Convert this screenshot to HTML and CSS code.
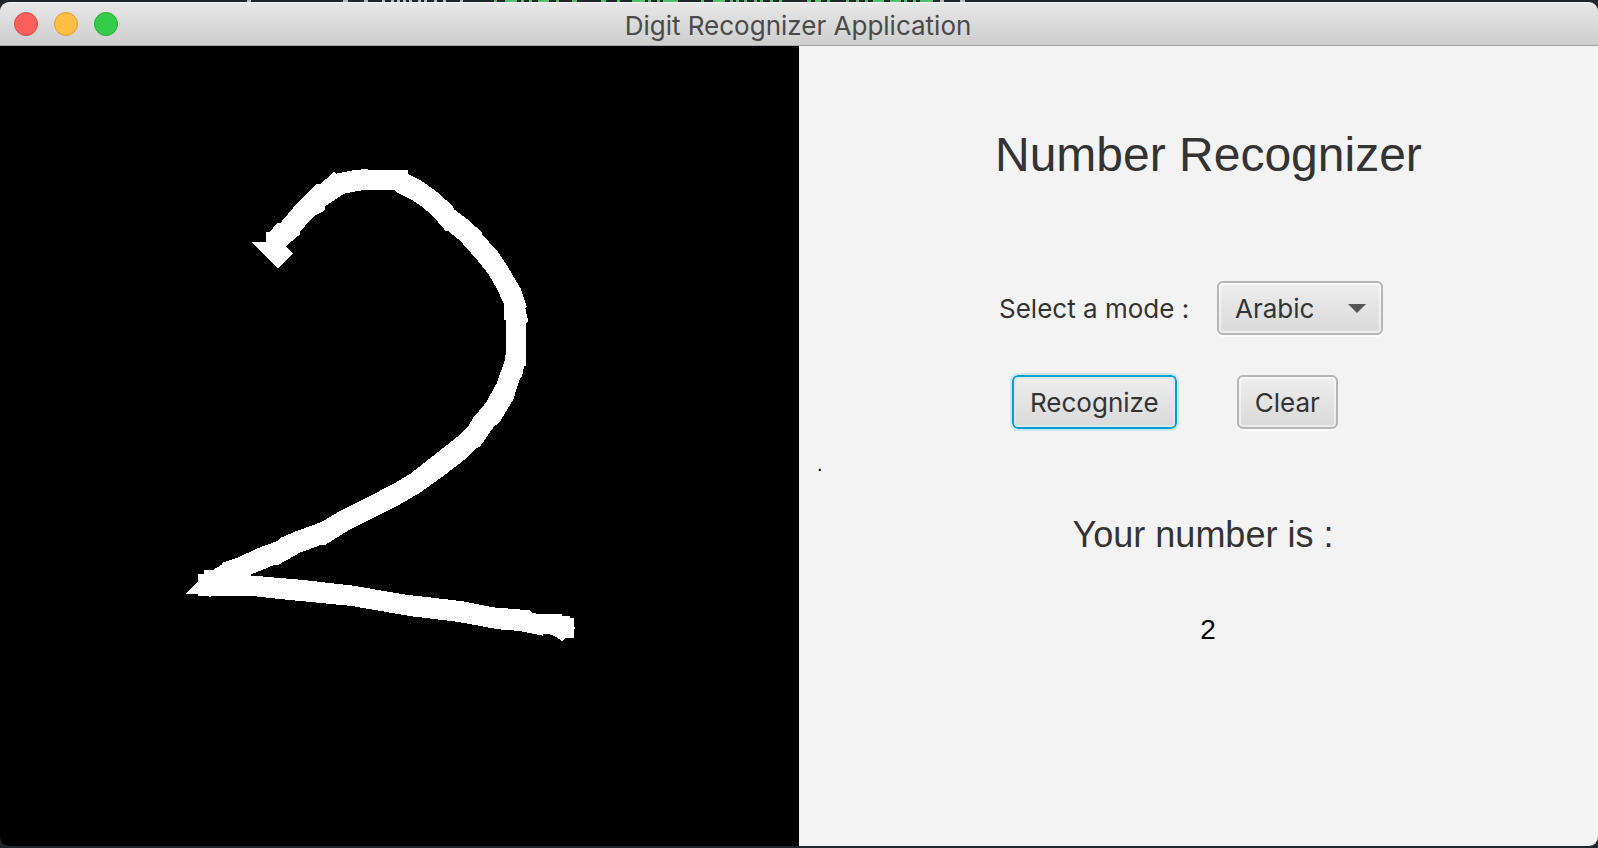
FILE: index.html
```html
<!DOCTYPE html>
<html lang="en">
<head>
<meta charset="utf-8">
<title>Digit Recognizer Application</title>
<link rel="stylesheet" href="styles.css">
</head>
<body>
<svg class="backdrop" width="1598" height="2" viewBox="0 0 1598 2" aria-hidden="true">
  <path stroke="#b9bcbe" stroke-width="2" d="M247 1h4M343 1h5M364 1h4M382 1h3M391 1h3M397 1h3M403 1h3M409 1h3M418 1h3M424 1h3M434 1h3M443 1h3M460 1h3M940 1h4M960 1h5"/>
  <path stroke="#4fbd6c" stroke-width="2" d="M494 1h3M505 1h12M521 1h3M529 1h3M538 1h11M556 1h3M572 1h5M601 1h5M617 1h3M632 1h13M648 1h3M657 1h3M663 1h15M701 1h3M713 1h12M730 1h3M736 1h3M744 1h3M754 1h3M760 1h3M770 1h3M779 1h3M807 1h4M815 1h6M827 1h3M846 1h3M856 1h3M865 1h3M873 1h11M890 1h11M904 1h3M913 1h3M920 1h13"/>
</svg>
<div class="window">
  <header class="titlebar">
    <div class="lights">
      <button class="light light-close" aria-label="Close"></button>
      <button class="light light-minimize" aria-label="Minimize"></button>
      <button class="light light-zoom" aria-label="Zoom"></button>
    </div>
    <div class="title">Digit Recognizer Application</div>
  </header>
  <main class="content">
    <section class="canvas" aria-label="Drawing area">
      <svg class="drawing" viewBox="0 0 2397 2400" preserveAspectRatio="xMinYMin meet" shape-rendering="crispEdges" fill="#fff">
        <path transform="translate(690 312)" d="M63 276L108 276 108 247 119 247 142 218 152 218 195 167 258 102 270 103 312 66 320 71 370 61 414 56 416 60 534 60 534 72 575 93 620 125 668 168 672 178 710 206 755 246 755 252 803 304 830 345 872 416 890 470 886 476 895 516 888 518 888 572 828 572 828 510 822 510 822 462 800 415 775 372 740 328 690 272 655 244 648 244 610 200 580 173 545 149 497 125 494 120 400 120 342 131 284 170 286 180 250 200 210 245 209 254 168 288 189 312 144 356Z"/>
        <path transform="translate(510 822)" d="M1008 0L1074 0 1075 6 1068 10 1068 136 1063 138 1055 172 1050 175 1030 238 990 305 970 322 930 380 920 384 885 418 820 468 750 518 690 553 540 628 465 675 455 674 390 698 322 736 310 736 237 766 400 780 550 797 700 823 880 844 970 862 1080 871 1083 877 1100 881 1176 882 1176 887 1200 889 1200 894 1212 894 1212 918 1217 924 1212 930 1212 953 1188 954 1176 965 1160 951 1135 941 1122 941 1118 947 1050 933 985 928 860 905 725 889 545 858 340 838 245 828 125 828 120 833 115 827 84 827 84 822 48 822 84 785 84 762 102 762 102 749 130 749 157 733 157 728 200 714 270 682 320 664 335 652 380 633 455 606 510 573 600 528 680 486 720 462 860 352 893 322 910 293 948 248 980 190 1003 125 1008 98Z"/>
      </svg>
    </section>
    <section class="panel">
      <div class="form">
        <h1 class="heading">Number Recognizer</h1>
        <div class="mode">
          <label for="mode">Select a mode :</label>
          <div class="combo">
            <select id="mode" class="control combo-select">
              <option>Arabic</option>
            </select>
            <svg class="caret" width="18" height="9" viewBox="0 0 18 9" aria-hidden="true"><path fill="#555" d="M0 0h18L9 9z"/></svg>
          </div>
        </div>
        <div class="actions">
          <button class="control button focused">Recognize</button>
          <button class="control button">Clear</button>
        </div>
      </div>
      <div class="status">.</div>
      <div class="form result">
        <h2 class="result-label">Your number is :</h2>
        <output class="result-value">2</output>
      </div>
    </section>
  </main>
</div>
</body>
</html>
```
FILE: styles.css
```css
* {
  box-sizing: border-box;
}

body {
  margin: 0;
  min-height: 100vh;
  display: flex;
  flex-direction: column;
  background: #222628;
  color: #333;
  font-family: Inter, "Liberation Sans", sans-serif;
  font-size: 26px;
}

.backdrop {
  display: block;
}

.window {
  flex: 1;
  display: flex;
  flex-direction: column;
  margin-bottom: 2px;
  border-radius: 9px;
  overflow: hidden;
}

.titlebar {
  display: grid;
  grid-template-columns: 1fr auto 1fr;
  align-items: center;
  height: 44px;
  padding: 0 16px 0 14px;
  background: linear-gradient(#e7e7e7, #cecece);
  border-top: 1px solid #f6f6f6;
  border-bottom: 1px solid #a6a6a6;
}

.lights {
  display: flex;
  gap: 16px;
}

.light {
  width: 24px;
  height: 24px;
  padding: 0;
  border: 1px solid;
  border-radius: 50%;
}

.light-close {
  background: #fc605c;
  border-color: #e04845;
}

.light-minimize {
  background: #fdbe41;
  border-color: #dfa036;
}

.light-zoom {
  background: #35cb4b;
  border-color: #27ab35;
}

.title {
  padding-top: 2px;
  color: #4a4a4a;
}

.content {
  flex: 1;
  display: grid;
  grid-template-columns: 1fr 1fr;
}

.canvas {
  background: #000;
}

.drawing {
  display: block;
  width: 100%;
}

.panel {
  padding-top: 81px;
  background: #f3f3f3;
}

.form {
  width: 428px;
  margin-left: 196px;
}

.heading {
  margin: 0;
  font: 48px/56px "Liberation Sans", Arial, sans-serif;
  white-space: nowrap;
}

.mode {
  display: flex;
  align-items: center;
  justify-content: space-between;
  margin: 98px 40px 0 4px;
}

.control {
  height: 54px;
  border: 2px solid #b5b5b5;
  border-radius: 6px;
  background: linear-gradient(#eee, #d9d9d9);
  box-shadow: inset 0 0 0 2px rgba(255, 255, 255, 0.5), 0 2px 0 #fbfbfb;
  color: #333;
  font: inherit;
}

.combo {
  display: grid;
  align-items: center;
  width: 166px;
}

.combo-select {
  grid-area: 1 / 1;
  width: 100%;
  padding: 0 40px 0 16px;
  appearance: none;
}

.caret {
  grid-area: 1 / 1;
  justify-self: end;
  margin-right: 17px;
  pointer-events: none;
}

.actions {
  display: flex;
  gap: 60px;
  margin: 40px 0 0 17px;
}

.button {
  padding: 0 16px;
}

.focused {
  border-color: #039ed3;
  outline: 2px solid #cbe8f2;
  box-shadow: inset 0 0 0 2px #d9e9ef;
}

.status {
  margin: 23px 0 0 18px;
  color: #000;
  font: 20px/24px "Liberation Sans", Arial, sans-serif;
}

.result {
  display: flex;
  flex-direction: column;
  align-items: center;
  gap: 58px;
  margin-top: 38px;
}

.result-label {
  margin: 0;
  padding-right: 12px;
  font: 36px/42px "Liberation Sans", Arial, sans-serif;
}

.result-value {
  padding-right: 2px;
  color: #000;
  font: 28px/32px "Liberation Sans", Arial, sans-serif;
}
```
